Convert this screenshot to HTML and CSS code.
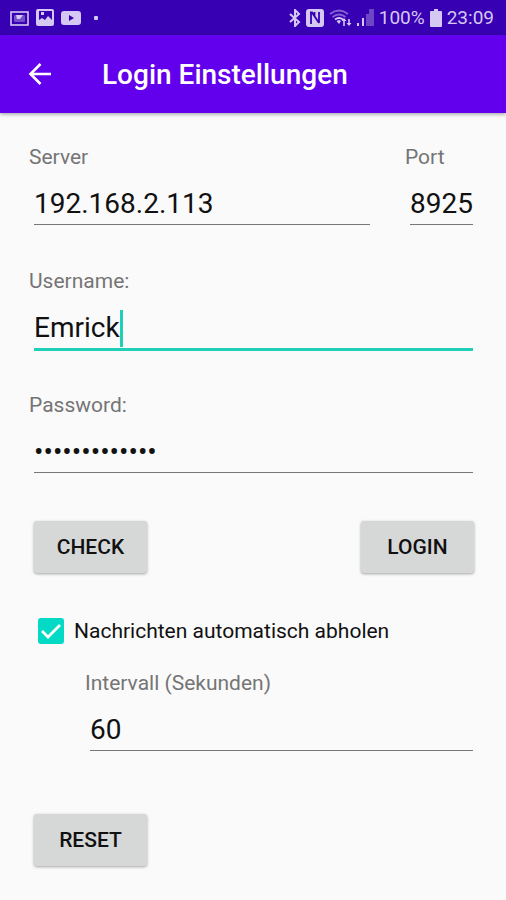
FILE: index.html
```html
<!DOCTYPE html>
<html lang="de">
<head>
<meta charset="utf-8">
<meta name="viewport" content="width=device-width, initial-scale=1">
<title>Login Einstellungen</title>
<link rel="stylesheet" href="styles.css">
</head>
<body>
<div class="status">
  <div class="status-group status-left">
    <svg width="19" height="16" viewBox="0 0 19 16"><rect x="1" y="2" width="17" height="13" fill="none" stroke="currentColor" stroke-width="1.6"/><rect x="4" y="5" width="11" height="7" rx="1" fill="currentColor" opacity=".4"/><path d="M6 5h7l-3 4H7z" fill="currentColor"/></svg>
    <svg width="18" height="17" viewBox="0 0 18 17"><path fill="currentColor" fill-rule="evenodd" d="M2 0h14q2 0 2 2v13q0 2-2 2H2q-2 0-2-2V2q0-2 2-2zm1 11 3-2 3 2 3-4 4 4V2H3zM5 3h3v3H5z"/></svg>
    <svg width="20" height="16" viewBox="0 0 20 16"><path fill="currentColor" fill-rule="evenodd" d="M3 1h14q3 0 3 3v8q0 3-3 3H3q-3 0-3-3V4q0-3 3-3zm5 4v6l5-3z"/></svg>
    <svg width="4" height="4" viewBox="0 0 4 4"><rect width="4" height="4" rx="1" fill="currentColor"/></svg>
  </div>
  <div class="status-group status-right">
    <svg width="12" height="18" viewBox="0 0 12 18"><path fill="none" stroke="currentColor" stroke-width="2" d="m1 5 9 8-4 4V1l4 4-9 8"/></svg>
    <svg width="18" height="18" viewBox="0 0 18 18"><rect width="18" height="18" rx="3" fill="currentColor"/><path fill="none" stroke="#3700b3" stroke-width="1.8" d="M5 15V4M4 3.500h2L13 14M8.500 3v4M13 3v11"/></svg>
    <svg width="23" height="18" viewBox="0 0 23 18"><g fill="none" stroke="currentColor" stroke-width="1.8"><path opacity=".5" d="M1 5q9-7 18 0M3.500 8q6.500-5 13 0"/><path d="M6 10.500q4-3 8 0"/></g><path fill="currentColor" d="m7.500 12 2.500-1 2 1-2 3zM15 9l2.500 3h-1.700v5h-1.600v-5h-1.700zM20 17l-2.500-3h1.700v-4h1.600v4h1.700z"/></svg>
    <svg width="17" height="17" viewBox="0 0 17 17"><path fill="currentColor" d="M0 14h2v3H0zM5 9h2v8H5z"/><path fill="currentColor" opacity=".35" d="M9 5h3v12H9zM12 0h5v17h-5z"/></svg>
    <span class="status-text">100%</span>
    <svg width="12" height="18" viewBox="0 0 12 18"><path fill="currentColor" d="M4 0h4v2h3q1 0 1 1v14q0 1-1 1H1q-1 0-1-1V3q0-1 1-1h3z"/></svg>
    <span class="status-text">23:09</span>
  </div>
</div>
<header class="appbar">
  <button class="back" type="button" aria-label="Zurück">
    <svg width="23" height="24" viewBox="0 0 23 24"><path fill="none" stroke="currentColor" stroke-width="2.600" d="M23 12H2.500M12.500 2 2.500 12l10 10"/></svg>
  </button>
  <h1 class="title">Login Einstellungen</h1>
</header>
<main>
  <form class="form">
    <div class="row">
      <div class="field grow">
        <label class="label" for="server">Server</label>
        <div class="box"><input class="input" id="server" type="text" value="192.168.2.113"></div>
      </div>
      <div class="field port">
        <label class="label" for="port">Port</label>
        <div class="box"><input class="input" id="port" type="text" value="8925"></div>
      </div>
    </div>
    <div class="field">
      <label class="label" for="user">Username:</label>
      <div class="box active"><input class="input fit" id="user" type="text" value="Emrick"><span class="caret"></span></div>
    </div>
    <div class="field">
      <label class="label" for="pass">Password:</label>
      <div class="box"><input class="input" id="pass" type="password" value="abcdefghijklm"></div>
    </div>
    <div class="buttons">
      <button class="button" type="button">CHECK</button>
      <button class="button" type="button">LOGIN</button>
    </div>
    <div class="check-row">
      <input class="check" id="auto" type="checkbox" checked>
      <label class="check-label" for="auto">Nachrichten automatisch abholen</label>
    </div>
    <div class="field interval">
      <label class="label" for="interval">Intervall (Sekunden)</label>
      <div class="box"><input class="input" id="interval" type="text" value="60"></div>
    </div>
    <div class="buttons reset">
      <button class="button" type="reset">RESET</button>
    </div>
  </form>
</main>
</body>
</html>
```
FILE: styles.css
```css
* { box-sizing: border-box; }
body {
  margin: 0;
  background: #fafafa;
  color: #111;
  font-family: Roboto, sans-serif;
}
svg { display: block; flex: none; }

.status {
  display: flex;
  justify-content: space-between;
  align-items: center;
  height: 35px;
  padding: 0 12px 0 10px;
  background: #3700b3;
  color: #d5c8f2;
}
.status-group { display: flex; align-items: center; }
.status-left { gap: 7px; }
.status-left svg:last-child { margin-left: 6px; }
.status-right { gap: 5px; }
.status-text { font-size: 19px; line-height: 24px; }

.appbar {
  display: flex;
  align-items: center;
  height: 78px;
  padding: 0 28px;
  gap: 51px;
  background: #6200ee;
  color: #fff;
  box-shadow: 0 1px 4px rgba(0, 0, 0, .4);
}
.back { padding: 0; border: 0; background: none; color: inherit; }
.title { margin: 0; padding-top: 2px; font-size: 28px; line-height: 36px; font-weight: 500; }

.form { padding: 30px 28px 30px 29px; }
.row { display: flex; gap: 30px; }
.grow { flex: 1; min-width: 0; }
.port { width: 73px; }
.field { display: flex; flex-direction: column; margin-bottom: 42px; }
.label { font-size: 21px; line-height: 28px; color: #757575; }
.box {
  display: flex;
  align-items: center;
  height: 41px;
  margin: 13px 5px 0;
  border-bottom: 1px solid #777;
}
.active {
  height: 43px;
  margin-bottom: -2px;
  border-bottom: 3px solid #1fcfb8;
}
.input {
  width: 100%;
  min-width: 0;
  padding: 0;
  border: 0;
  outline: 0;
  background: none;
  color: #111;
  font: 400 28px/36px Roboto, sans-serif;
}
.fit { width: auto; field-sizing: content; }
.caret { width: 3px; height: 37px; background: #1fcfb8; }

.buttons { display: flex; justify-content: space-between; margin: 48px 4px 0 5px; }
.button {
  width: 113px;
  height: 52px;
  padding: 0;
  border: 0;
  border-radius: 3px;
  background: #d6d7d7;
  color: #111;
  font: 500 21px/28px Roboto, sans-serif;
  box-shadow: 0 1px 3px rgba(0, 0, 0, .35);
}
.check-row { display: flex; align-items: center; gap: 10px; margin: 42px 9px 0; }
.check {
  appearance: none;
  width: 26px;
  height: 26px;
  margin: 0;
  border-radius: 3px;
  background: #03dac5 url("data:image/svg+xml,%3Csvg xmlns='http://www.w3.org/2000/svg' viewBox='0 0 26 26'%3E%3Cpath fill='none' stroke='white' stroke-width='2.800' d='M4 13l6 6L22 7'/%3E%3C/svg%3E");
}
.check-label { font-size: 21px; line-height: 32px; }
.interval { margin: 22px 0 0 56px; }
.reset { margin-top: 63px; }
```
